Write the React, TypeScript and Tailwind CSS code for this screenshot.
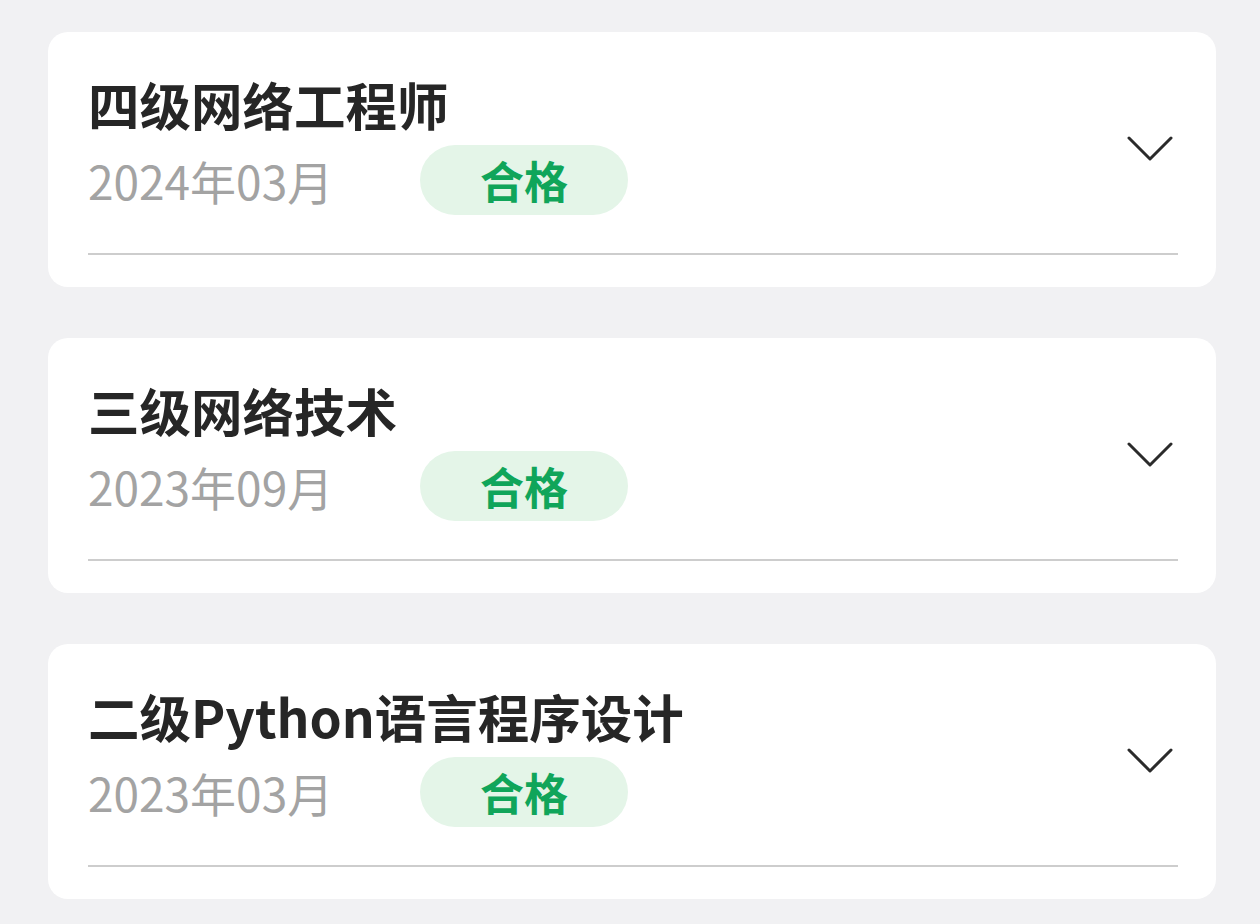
import React from 'react'

interface CertItem {
  title: string
  date: string
  result: string
}

const certs: CertItem[] = [
  { title: '四级网络工程师', date: '2024年03月', result: '合格' },
  { title: '三级网络技术', date: '2023年09月', result: '合格' },
  { title: '二级Python语言程序设计', date: '2023年03月', result: '合格' },
]

const Chevron = () => (
  <svg width="46" height="28" viewBox="0 0 46 28" fill="none">
    <polyline
      points="2,3 23,24 44,3"
      stroke="#2b2b2b"
      strokeWidth="3"
      strokeLinecap="round"
      strokeLinejoin="round"
    />
  </svg>
)

const CertCard = ({ item }: { item: CertItem }) => (
  <div className="bg-white rounded-[20px] pt-[40px] pb-[32px] pl-[40px] pr-[38px]">
    <div className="flex items-center justify-between">
      <div className="flex flex-col">
        <h3 className="text-[51.5px] leading-[64px] font-bold text-[#262626]">{item.title}</h3>
        <div className="flex items-center mt-[9px]">
          <span className="w-[332px] text-[46px] leading-[70px] text-[#a3a3a3]">{item.date}</span>
          <span className="w-[208px] h-[70px] rounded-full bg-[#e4f5e8] flex items-center justify-center text-[44px] font-bold text-[#10a55a]">
            {item.result}
          </span>
        </div>
      </div>
      <div className="mr-[5px] mt-[10px]">
        <Chevron />
      </div>
    </div>
    <div className="mt-[38px] h-[2px] bg-[#cdcdcd]" />
  </div>
)

export default function App() {
  return (
    <div
      className="min-h-[924px] bg-[#f1f1f3] pl-[48px] pr-[44px] pt-[32px] flex flex-col gap-[51px]"
      style={{ fontFamily: '"Noto Sans CJK SC", "Noto Sans", sans-serif' }}
    >
      {certs.map((c) => (
        <CertCard key={c.title} item={c} />
      ))}
    </div>
  )
}
